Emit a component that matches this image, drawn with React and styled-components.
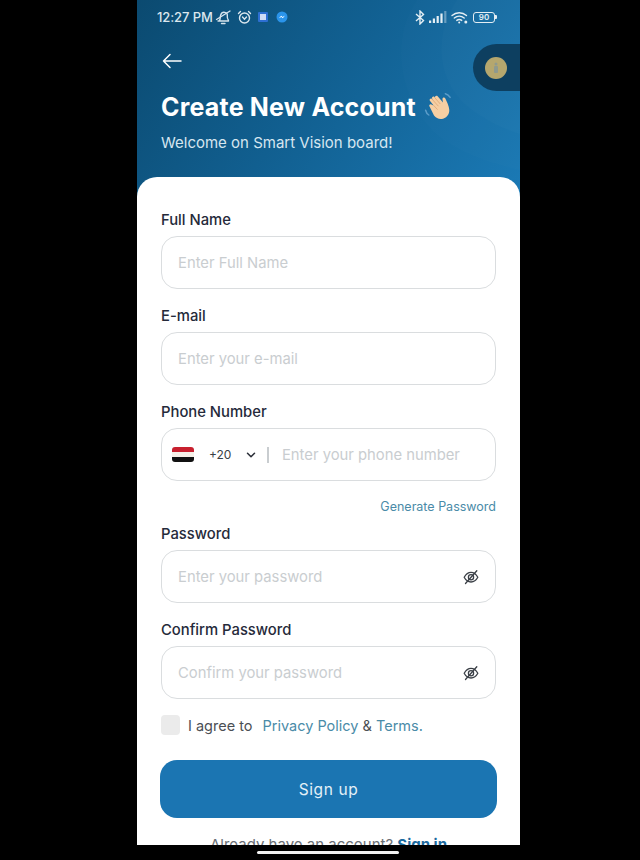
import React from 'react';
import styled, { createGlobalStyle } from 'styled-components';
import { ChevronDown } from 'lucide-react';

const App = () => {
  return <>
    <GlobalStyle/>
    <Page>
      <Phone>
        <Header>
          <HeaderWaves viewBox="0 0 383 177" fill="none" aria-hidden="true">
            <path d="M280 0C252 40 262 100 300 135C325 155 360 165 383 170V0Z" fill="#ffffff" opacity="0.012"/>
            <path d="M320 0C295 36 300 85 335 110C350 121 368 130 383 134V0Z" fill="#ffffff" opacity="0.014"/>
          </HeaderWaves>
          <StatusBar>
            <StatusGroup>
              <Time>12:27 PM</Time>
              <BellOffIcon/>
              <AlarmIcon/>
              <AppSquare/>
              <MessengerIcon/>
            </StatusGroup>
            <StatusGroup $right>
              <BluetoothIcon/>
              <SignalIcon/>
              <WifiIcon/>
              <BatteryIcon/>
            </StatusGroup>
          </StatusBar>
          <BackButton>
            <svg width="20" height="16" viewBox="0 0 20 16" fill="none" stroke="#fff" strokeWidth="1.5" strokeLinecap="round" strokeLinejoin="round">
              <path d="M19 8H1.5M8 1.5L1.5 8L8 14.5"/>
            </svg>
          </BackButton>
          <Title>Create New Account<WaveHand/></Title>
          <Subtitle>Welcome on Smart Vision board!</Subtitle>
          <FloatPill>
            <FloatDot>
              <svg width="10" height="12" viewBox="0 0 10 12" fill="#8f9a8e">
                <circle cx="5" cy="2" r="1.5"/>
                <rect x="3" y="4" width="4" height="7" rx="1"/>
              </svg>
            </FloatDot>
          </FloatPill>
        </Header>

        <Card>
          <Field label="Full Name">
            <Input placeholder="Enter Full Name"/>
          </Field>
          <Field label="E-mail">
            <Input placeholder="Enter your e-mail"/>
          </Field>
          <Field label="Phone Number">
            <PhonePrefix>
              <EgyptFlag/>
              <DialCode>+20</DialCode>
              <ChevronDown size={14} strokeWidth={2.6} color="#2b2f38"/>
              <PrefixDivider/>
            </PhonePrefix>
            <Input placeholder="Enter your phone number"/>
          </Field>
          <GeneratePassword>Generate Password</GeneratePassword>
          <Field label="Password">
            <Input placeholder="Enter your password"/>
            <EyeSlash/>
          </Field>
          <Field label="Confirm Password">
            <Input placeholder="Confirm your password"/>
            <EyeSlash/>
          </Field>
          <AgreeRow>
            <CheckBox/>
            <AgreeText>I agree to</AgreeText>
            <AgreeLinks><AgreeLink>Privacy Policy</AgreeLink> <Amp>&amp;</Amp> <AgreeLink>Terms.</AgreeLink></AgreeLinks>
          </AgreeRow>
          <SignUpButton>Sign up</SignUpButton>
          <SignInLine>Already have an account? <SignInLink>Sign in</SignInLink></SignInLine>
        </Card>
      </Phone>
      <HomeBar/>
    </Page>
  </>
}

const Field = ({ label, children }) => (
  <FieldWrapper>
    <Label>{label}</Label>
    <InputBox>{children}</InputBox>
  </FieldWrapper>
);

const BellOffIcon = () => (
  <BellSvg width="17" height="16" viewBox="0 0 17 16" fill="none" stroke="#d5e3ec" strokeWidth="1.4" strokeLinecap="round">
    <path d="M3 12h10.500M4.500 11.500c1-1.500.5-3.500 1.200-5.500C6.400 4 8 3 9.800 3.400c1.800.4 2.800 2 2.500 3.800-.2 1.500.3 3 1.200 4.300"/>
    <path d="M1.500 10.500L15 2M6.500 14.500h3.500"/>
  </BellSvg>
);

const AlarmIcon = () => (
  <svg width="15" height="15" viewBox="0 0 15 15" fill="none" stroke="#dbe7ee" strokeWidth="1.4" strokeLinecap="round">
    <circle cx="7.500" cy="8" r="5"/>
    <path d="M5.500 7l2 2.200L9.500 7M1.500 3.500L3.500 1.500M13.500 3.500L11.500 1.500"/>
  </svg>
);

const MessengerIcon = () => (
  <svg width="12" height="12" viewBox="0 0 12 12">
    <circle cx="6" cy="6" r="5.500" fill="#2a94ea"/>
    <path d="M2.800 7.300L5.200 4.800L6.600 6L9 4.600L6.800 7.200L5.400 6Z" fill="#fff"/>
  </svg>
);

const BluetoothIcon = () => (
  <svg width="10" height="15" viewBox="0 0 10 15" fill="none" stroke="#e4eef4" strokeWidth="1.400">
    <path d="M1 4l7.500 6.500L5 14V1l3.500 3.500L1 11"/>
  </svg>
);

const SignalIcon = () => (
  <svg width="18" height="12" viewBox="0 0 18 12" fill="#e4eef4">
    <rect x="0" y="9.500" width="2.200" height="2.500"/>
    <rect x="3.800" y="7.500" width="2.200" height="4.500"/>
    <rect x="7.600" y="5" width="2.200" height="7"/>
    <rect x="11.400" y="2.500" width="2.200" height="9.500"/>
    <rect x="15.200" y="0" width="2.200" height="12" opacity="0.4"/>
  </svg>
);

const WifiIcon = () => (
  <svg width="17" height="13" viewBox="0 0 17 13" fill="none" stroke="#e4eef4" strokeWidth="1.400" strokeLinecap="round">
    <path d="M1 4.500C5.200.800 11.200.800 15.500 4.500M3.300 7C6.200 4.600 10.300 4.600 13.200 7M5.800 9.400C7.200 8.300 9.200 8.300 10.700 9.400"/>
    <circle cx="8.200" cy="11.500" r="1" fill="#e4eef4" stroke="none"/>
    <circle cx="14.800" cy="11" r="1.500" fill="#e4eef4" stroke="none"/>
  </svg>
);

const BatteryIcon = () => (
  <BatteryWrapper>
    <BatteryBody>90</BatteryBody>
    <BatteryTip/>
  </BatteryWrapper>
);

const WaveHand = () => (
  <HandIcon width="32" height="30" viewBox="0 0 30 28" fill="none">
    <path d="M20 1.500c2 .5 3.500 1.800 4.500 3.500M1.500 17c.5 2 1.500 3.500 3 4.500" stroke="#5b9cc9" strokeWidth="1.400" strokeLinecap="round"/>
    <path d="M9 12.500L5.500 8.200c-.9-1.200.8-2.800 2-1.700l1.200 1.200-1-1.400c-.9-1.300 1-2.800 2.100-1.600l.6.700c-.5-1.400 1.300-2.600 2.400-1.400l5 5.800-.5-3c-.2-1.700 2-2.300 2.700-.8 1.500 3.500 3.500 7 3.700 10.500.3 4.500-3 8.400-7.300 8.700-3 .2-5.200-1.300-7-3.300L5.200 13.600c-1-1.300.8-2.900 2-1.700z" fill="#f6cfa3"/>
    <path d="M9 12.500l3.500 3.700M10.500 5.700l4.500 5.200M7.800 7l5.500 6" stroke="#dca878" strokeWidth="0.8" strokeLinecap="round"/>
  </HandIcon>
);

const EyeSlash = () => (
  <EyeIcon width="16" height="16" viewBox="0 0 16 16" fill="none" stroke="#3a3f46" strokeWidth="1.300" strokeLinecap="round">
    <path d="M1.200 8.300C2.800 5.300 5.200 3.300 8 3.300s5.200 2 6.800 5c-1.600 3-4 4.700-6.800 4.700s-5.200-1.700-6.800-4.700z"/>
    <circle cx="8" cy="8.200" r="2.600"/>
    <path d="M2.500 14.500L13.800 1.800"/>
  </EyeIcon>
);

export default App;

const GlobalStyle = createGlobalStyle`
  html, body {
    margin: 0;
    padding: 0;
    background: #000;
  }

  body {
    font-family: "Inter", "Open Sans", "Liberation Sans", sans-serif;
  }

  * {
    box-sizing: border-box;
  }
`;

const Page = styled.div`
  display: flex;
  flex-direction: column;
  align-items: flex-start;

  width: 640px;
  height: 860px;
  padding-left: 137px;
  overflow: hidden;

  background: #000;
`;

const Phone = styled.div`
  display: flex;
  flex-direction: column;

  width: 383px;
  height: 845px;
  flex-shrink: 0;
  overflow: hidden;

  background: #fff;
`;

const Header = styled.div`
  position: relative;
  display: flex;
  flex-direction: column;

  height: 200px;
  flex-shrink: 0;
  padding: 8px 24px 0;
  margin-bottom: -23px;

  background: linear-gradient(125deg, #0b4a70 0%, #115f90 45%, #1b7ab6 100%);
`;

const HeaderWaves = styled.svg`
  position: absolute;
  top: 0;
  left: 0;
  width: 383px;
  height: 177px;
`;

const StatusBar = styled.div`
  position: relative;
  display: flex;
  align-items: center;
  justify-content: space-between;

  height: 18px;
  margin: 0 -1px 0 -4px;
`;

const StatusGroup = styled.div`
  display: flex;
  align-items: center;
  gap: ${props => props.$right ? '4px' : '5px'};
`;

const Time = styled.span`
  color: #dbe7ee;
  font-size: 13px;
  font-weight: 500;
  letter-spacing: -0.1px;
`;

const BellSvg = styled.svg`
  margin-left: -3px;
`;

const AppSquare = styled.span`
  width: 10px;
  height: 10px;
  margin: 0 3px 0 1px;
  border-radius: 1px;
  border: 2.500px solid #2d6fd2;
  background: #cfdcf6;
`;

const BatteryWrapper = styled.div`
  display: flex;
  align-items: center;
  margin-left: 1px;
`;

const BatteryBody = styled.div`
  display: flex;
  align-items: center;
  justify-content: center;

  width: 22px;
  height: 11px;
  border: 1px solid #e4eef4;
  border-radius: 3px;

  color: #e4eef4;
  font-size: 8px;
  font-weight: 600;
`;

const BatteryTip = styled.div`
  width: 2px;
  height: 4px;
  border-radius: 0 1px 1px 0;
  background: #e4eef4;
`;

const BackButton = styled.div`
  position: relative;
  display: flex;

  margin-top: 27px;
  margin-left: 1px;
  height: 16px;
`;

const Title = styled.h1`
  position: relative;
  display: flex;
  align-items: center;
  gap: 8px;

  margin: 23px 0 0;
  height: 30px;

  color: #fff;
  font-size: 25px;
  font-weight: 700;
  letter-spacing: 0.2px;
  white-space: pre;
`;

const HandIcon = styled.svg`
  flex-shrink: 0;
  margin-top: -1px;
`;

const Subtitle = styled.p`
  position: relative;

  margin: 11px 0 0;

  color: #d6e6f0;
  font-size: 15px;
  font-weight: 400;
  line-height: 20px;
`;

const FloatPill = styled.div`
  position: absolute;
  top: 44px;
  right: 0;

  display: flex;
  align-items: center;

  width: 47px;
  height: 47px;
  padding-left: 12px;
  border-radius: 24px 0 0 24px;

  background: #0d3f60;
`;

const FloatDot = styled.div`
  display: flex;
  align-items: center;
  justify-content: center;

  width: 22px;
  height: 22px;
  border-radius: 50%;

  background: #b5a76e;
`;

const Card = styled.div`
  position: relative;
  display: flex;
  flex-direction: column;

  flex: 1;
  padding: 32px 24px 0;
  border-radius: 20px 20px 0 0;

  background: #fff;
`;

const FieldWrapper = styled.div`
  display: flex;
  flex-direction: column;
  gap: 7px;

  & + & {
    margin-top: 16px;
  }
`;

const Label = styled.label`
  height: 20px;

  color: #252a3a;
  font-size: 14.800px;
  font-weight: 500;
  line-height: 22px;
`;

const InputBox = styled.div`
  display: flex;
  align-items: center;

  height: 53px;
  padding: 0 16px;
  border: 1.500px solid #dadddf;
  border-radius: 16px;

  background: #fff;
`;

const Input = styled.input`
  flex: 1;
  min-width: 0;

  padding: 1px 0 0;
  border: none;
  outline: none;
  background: transparent;

  color: #252a3a;
  font-family: inherit;
  font-size: 14.800px;

  &::placeholder {
    color: #c9cdd0;
    opacity: 1;
  }
`;

const PhonePrefix = styled.div`
  display: flex;
  align-items: center;

  margin-left: -6px;
  margin-right: 13px;
`;

const EgyptFlag = styled.span`
  width: 22px;
  height: 15px;
  border-radius: 3px;

  background: linear-gradient(#c8202f 0 33%, #f5f0e8 33% 66%, #111 66% 100%);
`;

const DialCode = styled.span`
  margin: 0 13px 0 15px;

  color: #3a3f46;
  font-size: 12px;
`;

const PrefixDivider = styled.span`
  width: 1.500px;
  height: 16px;
  margin-left: 9px;

  background: #c9cdd0;
`;

const EyeIcon = styled.svg`
  flex-shrink: 0;
`;

const GeneratePassword = styled.div`
  margin: 16px 0 6px;

  color: #4a8ba8;
  font-size: 12.500px;
  font-weight: 400;
  line-height: 20px;
  text-align: right;
`;

const AgreeRow = styled.div`
  display: flex;
  align-items: center;

  margin-top: 16px;
  height: 20px;
`;

const CheckBox = styled.span`
  width: 19px;
  height: 20px;
  border-radius: 4px;

  background: #ebebeb;
`;

const AgreeText = styled.span`
  margin: 0 10px 0 8px;

  color: #4b4f55;
  font-size: 14.500px;
`;

const AgreeLinks = styled.span`
  font-size: 14.500px;
  white-space: pre;
`;

const AgreeLink = styled.a`
  color: #4a8ba8;
`;

const Amp = styled.span`
  color: #4b4f55;
`;

const SignUpButton = styled.button`
  flex-shrink: 0;

  height: 58px;
  margin: 25px -1px 0;
  border: none;
  border-radius: 17px;

  background: #1b75b2;

  color: #e4f1f8;
  font-family: inherit;
  font-size: 15.500px;
  font-weight: 400;
  letter-spacing: 0.6px;
`;

const SignInLine = styled.div`
  margin-top: 17px;

  color: #6a6f75;
  font-size: 15px;
  line-height: 20px;
  text-align: center;
`;

const SignInLink = styled.span`
  color: #1b6a9e;
  font-weight: 700;
`;

const HomeBar = styled.div`
  width: 142px;
  height: 3px;
  margin-top: 6px;
  margin-left: 120px;
  border-radius: 2px;

  background: #f2f2f2;
`;
